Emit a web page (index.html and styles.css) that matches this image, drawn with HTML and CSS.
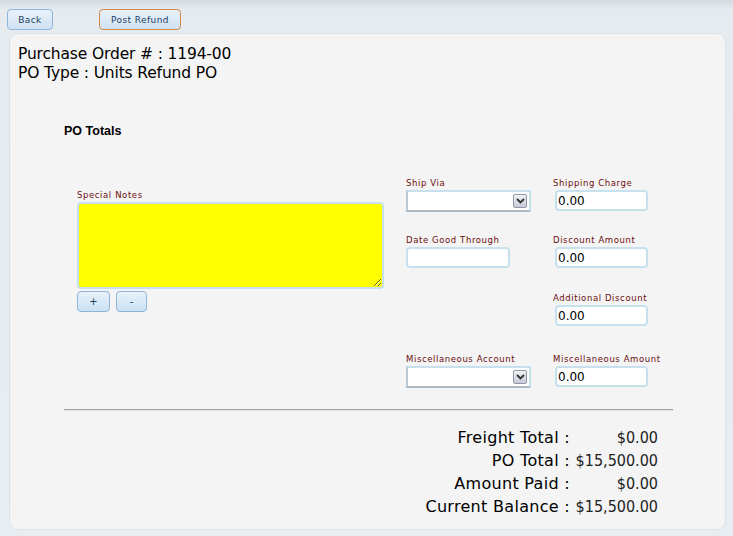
FILE: index.html
```html
<!DOCTYPE html>
<html lang="en">
<head>
    <meta charset="UTF-8">
    <meta name="viewport" content="width=device-width, initial-scale=1.0">
    <title>Purchase Order</title>
    <link rel="stylesheet" href="styles.css">
</head>
<body>
    <div class="toolbar">
        <button class="custom-button back-button">Back</button>
        <button class="custom-button refund-button">Post Refund</button>
    </div>
    <div class="panel">
        <div class="po-title">
            <div>Purchase Order # : 1194-00</div>
            <div>PO Type : Units Refund PO</div>
        </div>
        <div class="section-title">PO Totals</div>
        <div class="form-area">
            <div class="notes-column">
                <div class="field-label">Special Notes</div>
                <textarea class="notes-input"></textarea>
                <div class="notes-buttons">
                    <button class="small-button">+</button>
                    <button class="small-button">-</button>
                </div>
            </div>
            <div class="fields-grid">
                <div class="field">
                    <div class="field-label">Ship Via</div>
                    <div class="select-box"><span class="select-arrow"><svg width="9" height="6" viewBox="0 0 9 6"><path d="M1 1 L4.5 4.5 L8 1" fill="none" stroke="#333" stroke-width="1.8"/></svg></span></div>
                </div>
                <div class="field">
                    <div class="field-label">Shipping Charge</div>
                    <input class="text-input money-input" value="0.00">
                </div>
                <div class="field">
                    <div class="field-label">Date Good Through</div>
                    <input class="text-input date-input" value="">
                </div>
                <div class="field">
                    <div class="field-label">Discount Amount</div>
                    <input class="text-input money-input" value="0.00">
                </div>
                <div class="field"></div>
                <div class="field">
                    <div class="field-label">Additional Discount</div>
                    <input class="text-input money-input" value="0.00">
                </div>
                <div class="field last-row">
                    <div class="field-label">Miscellaneous Account</div>
                    <div class="select-box"><span class="select-arrow"><svg width="9" height="6" viewBox="0 0 9 6"><path d="M1 1 L4.5 4.5 L8 1" fill="none" stroke="#333" stroke-width="1.8"/></svg></span></div>
                </div>
                <div class="field last-row">
                    <div class="field-label">Miscellaneous Amount</div>
                    <input class="text-input money-input" value="0.00">
                </div>
            </div>
        </div>
        <hr class="divider">
        <div class="totals">
            <div class="total-label">Freight Total :</div><div class="total-value">$0.00</div>
            <div class="total-label">PO Total :</div><div class="total-value">$15,500.00</div>
            <div class="total-label">Amount Paid :</div><div class="total-value">$0.00</div>
            <div class="total-label">Current Balance :</div><div class="total-value">$15,500.00</div>
        </div>
    </div>
</body>
</html>
```

FILE: styles.css
```css
html, body {
    height: 100%;
}
body {
    font-family: "DejaVu Sans", Verdana, sans-serif;
    margin: 0;
    padding: 0;
    background: linear-gradient(to bottom, #d3dce3 0px, #e6ebef 10px, #e8edf1 100%);
    color: #000;
    display: flex;
    flex-direction: column;
}
.toolbar {
    flex-shrink: 0;
    display: flex;
    gap: 46px;
    padding: 9px 0 0 7px;
    height: 24px;
}
.custom-button {
    cursor: pointer;
    font-family: "DejaVu Sans", Verdana, sans-serif;
    font-size: 9px;
    letter-spacing: 0.4px;
    color: #1d3f63;
    background: linear-gradient(to bottom, #e9f2fb 0%, #dbe9f6 55%, #cfe2f3 100%);
    border: 1px solid #8fb5d8;
    border-radius: 4px;
    height: 21px;
    padding: 0;
}
.back-button {
    width: 46px;
}
.refund-button {
    width: 82px;
    border-color: #d08a4c;
}
.panel {
    flex: 1;
    margin: 0 7px 6px 9px;
    background-color: #f4f4f4;
    border: 1px solid #dae1e7;
    border-radius: 9px;
    padding: 11px 8px 0 8px;
}
.po-title {
    font-size: 15.5px;
    line-height: 19px;
    letter-spacing: -0.15px;
}
.section-title {
    font-family: "Liberation Sans", Arial, sans-serif;
    font-weight: bold;
    font-size: 12.5px;
    margin: 41px 0 0 46px;
}
.form-area {
    display: flex;
    margin-top: 39px;
}
.notes-column {
    margin: 12px 0 0 59px;
    width: 308px;
}
.field-label {
    font-family: "DejaVu Sans", Verdana, sans-serif;
    font-size: 8.5px;
    letter-spacing: 0.6px;
    color: #6b0d0d;
    height: 12px;
    line-height: 12px;
    margin-bottom: 1px;
    white-space: nowrap;
}
.notes-input {
    display: block;
    box-sizing: border-box;
    width: 307px;
    height: 87px;
    background-color: #ffff00;
    border: 2px solid #c7e0ee;
    border-radius: 4px;
    margin: 0;
    resize: both;
}
.notes-buttons {
    display: flex;
    gap: 6px;
    margin-top: 2px;
}
.small-button {
    font-family: "DejaVu Sans", Verdana, sans-serif;
    font-size: 10px;
    color: #1d3f63;
    background: linear-gradient(to bottom, #e7f1fa 0%, #d7e8f6 60%, #cae0f3 100%);
    border: 1px solid #8fb5d8;
    border-radius: 4px;
    width: 33px;
    height: 21px;
    padding: 0;
}
.small-button + .small-button {
    width: 31px;
}
.fields-grid {
    display: grid;
    grid-template-columns: 147px 120px;
    grid-template-rows: 57px 58px 61px auto;
    margin-left: 21px;
}
.select-box {
    box-sizing: border-box;
    width: 125px;
    height: 22px;
    background: #fff;
    border: 2px solid #c7e0ee;
    border-left-color: #b8c8d4;
    border-bottom-color: #aeb9c2;
    position: relative;
}
.select-arrow {
    position: absolute;
    right: 2px;
    top: 2px;
    width: 14px;
    height: 14px;
    box-sizing: border-box;
    border: 1px solid #8e98a4;
    border-radius: 2px;
    background: linear-gradient(to bottom, #f0f2f6, #c8ccd8);
    display: flex;
    align-items: center;
    justify-content: center;
}
.text-input {
    box-sizing: border-box;
    height: 21px;
    background: #fff;
    border: 2px solid #c7e0ee;
    border-radius: 4px;
    margin: 0 0 0 2px;
    padding: 0 1px;
    font-family: "DejaVu Sans", Verdana, sans-serif;
    font-size: 12px;
    color: #000;
    display: block;
}
.money-input {
    width: 93px;
}
.date-input {
    width: 104px;
    margin-left: 0;
}
.divider {
    border: none;
    border-top: 1px solid #a3a3a3;
    border-bottom: 1px solid #e0e0e0;
    margin: 21px 44px 0 46px;
}
.totals {
    display: grid;
    grid-template-columns: auto 86px;
    justify-content: end;
    margin: 15px 59px 0 0;
    line-height: 23px;
}
.total-label {
    font-size: 16px;
    letter-spacing: 0.3px;
    text-align: right;
    padding-right: 2px;
}
.total-value {
    font-family: "DejaVu Sans Condensed", "DejaVu Sans", sans-serif;
    font-stretch: condensed;
    font-size: 16px;
    text-align: right;
    color: #222;
}
```
